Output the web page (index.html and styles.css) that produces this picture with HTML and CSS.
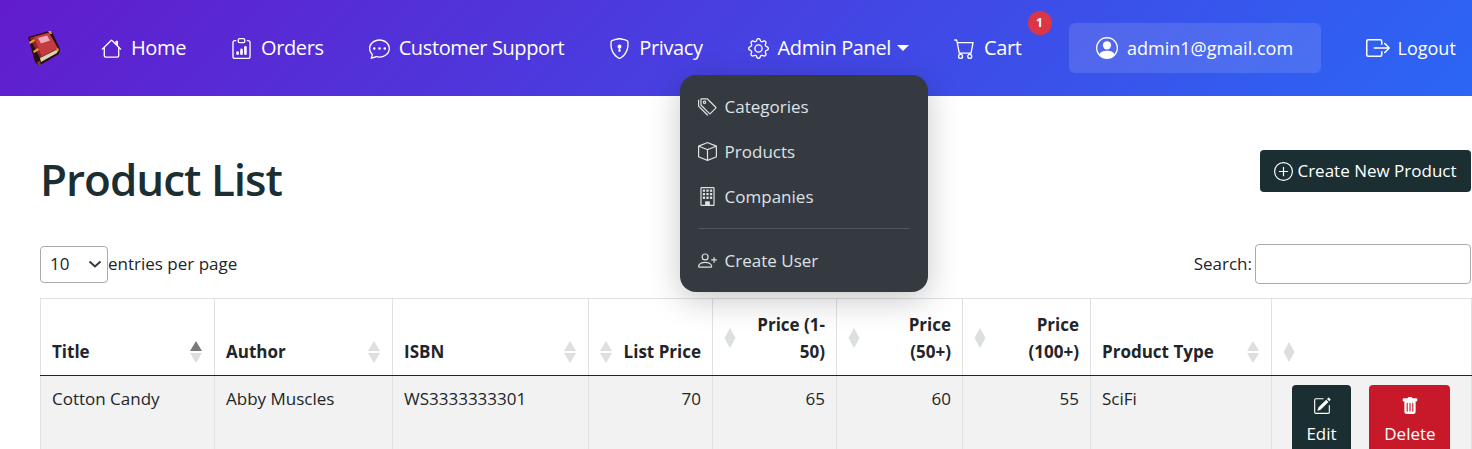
FILE: index.html
```html
<!DOCTYPE html>
<html lang="en">
<head>
  <meta charset="UTF-8">
  <meta name="viewport" content="width=device-width, initial-scale=1.0">
  <title>Product List</title>
  <link rel="stylesheet" href="styles.css">
</head>
<body>
  <svg class="sprite" xmlns="http://www.w3.org/2000/svg">
    <symbol id="i-house" viewBox="0 0 16 16"><path d="M8.707 1.5a1 1 0 0 0-1.414 0L.646 8.146a.5.5 0 0 0 .708.708L2 8.207V13.5A1.5 1.5 0 0 0 3.5 15h9a1.5 1.5 0 0 0 1.5-1.5V8.207l.646.647a.5.5 0 0 0 .708-.708L13 5.793V2.5a.5.5 0 0 0-.5-.5h-1a.5.5 0 0 0-.5.5v1.293zM13 7.207V13.5a.5.5 0 0 1-.5.5h-9a.5.5 0 0 1-.5-.5V7.207l5-5z"/></symbol>
    <symbol id="i-orders" viewBox="0 0 16 16"><path d="M4 11a1 1 0 1 1 2 0v1a1 1 0 1 1-2 0zm6-4a1 1 0 1 1 2 0v5a1 1 0 1 1-2 0zM7 9a1 1 0 0 1 2 0v3a1 1 0 1 1-2 0z"/><path d="M4 1.5H3a2 2 0 0 0-2 2V14a2 2 0 0 0 2 2h10a2 2 0 0 0 2-2V3.5a2 2 0 0 0-2-2h-1v1h1a1 1 0 0 1 1 1V14a1 1 0 0 1-1 1H3a1 1 0 0 1-1-1V3.5a1 1 0 0 1 1-1h1z"/><path d="M9.5 1a.5.5 0 0 1 .5.5v1a.5.5 0 0 1-.5.5h-3a.5.5 0 0 1-.5-.5v-1a.5.5 0 0 1 .5-.5zm-3-1A1.5 1.5 0 0 0 5 1.5v1A1.5 1.5 0 0 0 6.5 4h3A1.5 1.5 0 0 0 11 2.5v-1A1.5 1.5 0 0 0 9.5 0z"/></symbol>
    <symbol id="i-chat" viewBox="0 0 16 16"><path d="M5 8a1 1 0 1 1-2 0 1 1 0 0 1 2 0m4 0a1 1 0 1 1-2 0 1 1 0 0 1 2 0m3 1a1 1 0 1 0 0-2 1 1 0 0 0 0 2"/><path d="m2.165 15.803.02-.004c1.83-.363 2.948-.842 3.468-1.105A9 9 0 0 0 8 15c4.418 0 8-3.134 8-7s-3.582-7-8-7-8 3.134-8 7c0 1.76.743 3.37 1.97 4.6a10.4 10.4 0 0 1-.524 2.318l-.003.011a11 11 0 0 1-.244.637c-.079.186.074.394.273.362a22 22 0 0 0 .693-.125m.8-3.108a1 1 0 0 0-.287-.801C1.618 10.83 1 9.468 1 8c0-3.192 3.004-6 7-6s7 2.808 7 6-3.004 6-7 6a8 8 0 0 1-2.088-.272 1 1 0 0 0-.711.074c-.387.196-1.24.57-2.634.893a11 11 0 0 0 .398-2"/></symbol>
    <symbol id="i-shield" viewBox="0 0 16 16"><path d="M5.338 1.59a61 61 0 0 0-2.837.856.48.48 0 0 0-.328.39c-.554 4.157.726 7.19 2.253 9.188a10.7 10.7 0 0 0 2.287 2.233c.346.244.652.42.893.533q.18.085.293.118a1 1 0 0 0 .101.025 1 1 0 0 0 .1-.025q.114-.034.294-.118c.24-.113.547-.29.893-.533a10.7 10.7 0 0 0 2.287-2.233c1.527-1.997 2.807-5.031 2.253-9.188a.48.48 0 0 0-.328-.39c-.651-.213-1.75-.56-2.837-.855C9.552 1.29 8.531 1.067 8 1.067c-.53 0-1.552.223-2.662.524zM5.072.56C6.157.265 7.31 0 8 0s1.843.265 2.928.56c1.11.3 2.229.655 2.887.87a1.54 1.54 0 0 1 1.044 1.262c.596 4.477-.787 7.795-2.465 9.99a11.8 11.8 0 0 1-2.517 2.453 7 7 0 0 1-1.048.625c-.28.132-.581.24-.829.24s-.548-.108-.829-.24a7 7 0 0 1-1.048-.625 11.8 11.8 0 0 1-2.517-2.453C1.928 10.487.545 7.169 1.141 2.692A1.54 1.54 0 0 1 2.185 1.43 63 63 0 0 1 5.072.56"/><path d="M9.5 6.5a1.5 1.5 0 0 1-1 1.415l.385 1.99a.5.5 0 0 1-.491.595h-.788a.5.5 0 0 1-.49-.595l.384-1.99a1.5 1.5 0 1 1 2-1.415"/></symbol>
    <symbol id="i-gear" viewBox="0 0 16 16"><path d="M8 4.754a3.246 3.246 0 1 0 0 6.492 3.246 3.246 0 0 0 0-6.492M5.754 8a2.246 2.246 0 1 1 4.492 0 2.246 2.246 0 0 1-4.492 0"/><path d="M9.796 1.343c-.527-1.79-3.065-1.79-3.592 0l-.094.319a.873.873 0 0 1-1.255.52l-.292-.16c-1.64-.892-3.433.902-2.54 2.541l.159.292a.873.873 0 0 1-.52 1.255l-.319.094c-1.79.527-1.79 3.065 0 3.592l.319.094a.873.873 0 0 1 .52 1.255l-.16.292c-.892 1.64.901 3.434 2.541 2.54l.292-.159a.873.873 0 0 1 1.255.52l.094.319c.527 1.79 3.065 1.79 3.592 0l.094-.319a.873.873 0 0 1 1.255-.52l.292.16c1.64.893 3.434-.902 2.54-2.541l-.159-.292a.873.873 0 0 1 .52-1.255l.319-.094c1.79-.527 1.79-3.065 0-3.592l-.319-.094a.873.873 0 0 1-.52-1.255l.16-.292c.893-1.64-.902-3.433-2.541-2.54l-.292.159a.873.873 0 0 1-1.255-.52zm-2.633.283c.246-.835 1.428-.835 1.674 0l.094.319a1.873 1.873 0 0 0 2.693 1.115l.291-.16c.764-.415 1.6.42 1.184 1.185l-.159.292a1.873 1.873 0 0 0 1.116 2.692l.318.094c.835.246.835 1.428 0 1.674l-.319.094a1.873 1.873 0 0 0-1.115 2.693l.16.291c.415.764-.42 1.6-1.185 1.184l-.291-.159a1.873 1.873 0 0 0-2.693 1.116l-.094.318c-.246.835-1.428.835-1.674 0l-.094-.319a1.873 1.873 0 0 0-2.692-1.115l-.292.16c-.764.415-1.6-.42-1.184-1.185l.159-.291A1.873 1.873 0 0 0 1.945 8.93l-.319-.094c-.835-.246-.835-1.428 0-1.674l.319-.094A1.873 1.873 0 0 0 3.06 4.377l-.16-.292c-.415-.764.42-1.6 1.185-1.184l.292.159a1.873 1.873 0 0 0 2.692-1.115z"/></symbol>
    <symbol id="i-cart" viewBox="0 0 16 16"><path d="M0 1.5A.5.5 0 0 1 .5 1H2a.5.5 0 0 1 .485.379L2.89 3H14.5a.5.5 0 0 1 .491.592l-1.5 8A.5.5 0 0 1 13 12H4a.5.5 0 0 1-.491-.408L2.01 3.607 1.61 2H.5a.5.5 0 0 1-.5-.5M3.102 4l1.313 7h8.17l1.313-7zM5 12a2 2 0 1 0 0 4 2 2 0 0 0 0-4m7 0a2 2 0 1 0 0 4 2 2 0 0 0 0-4m-7 1a1 1 0 1 1 0 2 1 1 0 0 1 0-2m7 0a1 1 0 1 1 0 2 1 1 0 0 1 0-2"/></symbol>
    <symbol id="i-person" viewBox="0 0 16 16"><path d="M11 6a3 3 0 1 1-6 0 3 3 0 0 1 6 0"/><path fill-rule="evenodd" d="M0 8a8 8 0 1 1 16 0A8 8 0 0 1 0 8m8-7a7 7 0 0 0-5.468 11.37C3.242 11.226 4.805 10 8 10s4.757 1.225 5.468 2.37A7 7 0 0 0 8 1"/></symbol>
    <symbol id="i-logout" viewBox="0 0 16 16"><path fill-rule="evenodd" d="M10 12.5a.5.5 0 0 1-.5.5h-8a.5.5 0 0 1-.5-.5v-9a.5.5 0 0 1 .5-.5h8a.5.5 0 0 1 .5.5v2a.5.5 0 0 0 1 0v-2A1.5 1.5 0 0 0 9.5 2h-8A1.5 1.5 0 0 0 0 3.5v9A1.5 1.5 0 0 0 1.5 14h8a1.5 1.5 0 0 0 1.5-1.5v-2a.5.5 0 0 0-1 0z"/><path fill-rule="evenodd" d="M15.854 8.354a.5.5 0 0 0 0-.708l-3-3a.5.5 0 0 0-.708.708L14.293 7.5H5.5a.5.5 0 0 0 0 1h8.793l-2.147 2.146a.5.5 0 0 0 .708.708z"/></symbol>
    <symbol id="i-tags" viewBox="0 0 16 16"><path d="M3 2v4.586l7 7L14.586 9l-7-7zM2 2a1 1 0 0 1 1-1h4.586a1 1 0 0 1 .707.293l7 7a1 1 0 0 1 0 1.414l-4.586 4.586a1 1 0 0 1-1.414 0l-7-7A1 1 0 0 1 2 6.586z"/><path d="M5.5 5a.5.5 0 1 1 0-1 .5.5 0 0 1 0 1m0 1a1.5 1.5 0 1 0 0-3 1.5 1.5 0 0 0 0 3M1 7.086a1 1 0 0 0 .293.707L8.75 15.25l-.043.043a1 1 0 0 1-1.414 0l-7-7A1 1 0 0 1 0 7.586V3a1 1 0 0 1 1-1z"/></symbol>
    <symbol id="i-box" viewBox="0 0 16 16"><path d="M8.186 1.113a.5.5 0 0 0-.372 0L1.846 3.5 8 5.961 14.154 3.5zM15 4.239l-6.5 2.6v7.922l6.5-2.6V4.24zM7.5 14.762V6.838L1 4.239v7.925zM7.443.184a1.5 1.5 0 0 1 1.114 0l7.129 2.852A.5.5 0 0 1 16 3.5v8.662a1 1 0 0 1-.629.928l-7.185 2.874a.5.5 0 0 1-.372 0L.63 13.09a1 1 0 0 1-.63-.928V3.5a.5.5 0 0 1 .314-.464z"/></symbol>
    <symbol id="i-building" viewBox="0 0 16 16"><path d="M4 2.5a.5.5 0 0 1 .5-.5h1a.5.5 0 0 1 .5.5v1a.5.5 0 0 1-.5.5h-1a.5.5 0 0 1-.5-.5zm3 0a.5.5 0 0 1 .5-.5h1a.5.5 0 0 1 .5.5v1a.5.5 0 0 1-.5.5h-1a.5.5 0 0 1-.5-.5zm3.5-.5a.5.5 0 0 0-.5.5v1a.5.5 0 0 0 .5.5h1a.5.5 0 0 0 .5-.5v-1a.5.5 0 0 0-.5-.5zM4 5.500a.5.5 0 0 1 .5-.5h1a.5.5 0 0 1 .5.5v1a.5.5 0 0 1-.5.5h-1a.5.5 0 0 1-.5-.5zM7.500 5a.5.5 0 0 0-.5.5v1a.5.5 0 0 0 .5.5h1a.5.5 0 0 0 .5-.5v-1a.5.5 0 0 0-.5-.5zm2.500.5a.5.5 0 0 1 .5-.5h1a.5.5 0 0 1 .5.5v1a.5.5 0 0 1-.5.5h-1a.5.5 0 0 1-.5-.5zM4.500 8a.5.5 0 0 0-.5.5v1a.5.5 0 0 0 .5.5h1a.5.5 0 0 0 .5-.5v-1a.5.5 0 0 0-.5-.5zm2.500.5a.5.5 0 0 1 .5-.5h1a.5.5 0 0 1 .5.5v1a.5.5 0 0 1-.5.5h-1a.5.5 0 0 1-.5-.5zm3.500-.5a.5.5 0 0 0-.5.5v1a.5.5 0 0 0 .5.5h1a.5.5 0 0 0 .5-.5v-1a.5.5 0 0 0-.5-.5z"/><path d="M2 1a1 1 0 0 1 1-1h10a1 1 0 0 1 1 1v14a1 1 0 0 1-1 1H3a1 1 0 0 1-1-1zm11 0H3v14h3v-2.5a.5.5 0 0 1 .5-.5h3a.5.5 0 0 1 .5.5V15h3z"/></symbol>
    <symbol id="i-user-plus" viewBox="0 0 16 16"><path d="M6 8a3 3 0 1 0 0-6 3 3 0 0 0 0 6m2-3a2 2 0 1 1-4 0 2 2 0 0 1 4 0m4 8c0 1-1 1-1 1H1s-1 0-1-1 1-4 6-4 6 3 6 4m-1-.004c-.001-.246-.154-.986-.832-1.664C9.516 10.68 8.289 10 6 10s-3.516.68-4.168 1.332c-.678.678-.83 1.418-.832 1.664z"/><path fill-rule="evenodd" d="M13.5 5a.5.5 0 0 1 .5.5V7h1.5a.5.5 0 0 1 0 1H14v1.5a.5.5 0 0 1-1 0V8h-1.5a.5.5 0 0 1 0-1H13V5.5a.5.5 0 0 1 .5-.5"/></symbol>
    <symbol id="i-plus" viewBox="0 0 16 16"><path d="M8 15A7 7 0 1 1 8 1a7 7 0 0 1 0 14m0 1A8 8 0 1 0 8 0a8 8 0 0 0 0 16"/><path d="M8 4a.5.5 0 0 1 .5.5v3h3a.5.5 0 0 1 0 1h-3v3a.5.5 0 0 1-1 0v-3h-3a.5.5 0 0 1 0-1h3v-3A.5.5 0 0 1 8 4"/></symbol>
    <symbol id="i-edit" viewBox="0 0 16 16"><path d="M15.502 1.94a.5.5 0 0 1 0 .706L14.459 3.69l-2-2L13.502.646a.5.5 0 0 1 .707 0l1.293 1.293zm-1.75 2.456-2-2L4.939 9.21a.5.5 0 0 0-.121.196l-.805 2.414a.25.25 0 0 0 .316.316l2.414-.805a.5.5 0 0 0 .196-.12l6.813-6.814z"/><path fill-rule="evenodd" d="M1 13.5A1.5 1.5 0 0 0 2.5 15h11a1.5 1.5 0 0 0 1.5-1.5v-6a.5.5 0 0 0-1 0v6a.5.5 0 0 1-.5.5h-11a.5.5 0 0 1-.5-.5v-11a.5.5 0 0 1 .5-.5H9a.5.5 0 0 0 0-1H2.5A1.5 1.5 0 0 0 1 2.5z"/></symbol>
    <symbol id="i-trash" viewBox="0 0 16 16"><path d="M2.5 1a1 1 0 0 0-1 1v1a1 1 0 0 0 1 1H3v9a2 2 0 0 0 2 2h6a2 2 0 0 0 2-2V4h.5a1 1 0 0 0 1-1V2a1 1 0 0 0-1-1H10a1 1 0 0 0-1-1H7a1 1 0 0 0-1 1zm3 4a.5.5 0 0 1 .5.5v7a.5.5 0 0 1-1 0v-7a.5.5 0 0 1 .5-.5M8 5a.5.5 0 0 1 .5.5v7a.5.5 0 0 1-1 0v-7A.5.5 0 0 1 8 5m3 .5v7a.5.5 0 0 1-1 0v-7a.5.5 0 0 1 1 0"/></symbol>
    <symbol id="i-sort" viewBox="0 0 12 22"><path class="up" d="M6 0l6 10H0z"/><path d="M6 22L0 12h12z"/></symbol>
    <symbol id="i-diamond" viewBox="0 0 12 22"><path d="M6 1l5.500 10L6 21 .5 11z"/></symbol>
  </svg>

  <nav class="navbar">
    <a class="brand" href="#">
      <svg class="book" viewBox="0 0 34 36">
        <path d="M2 7L23 1l3 1 8 17-1 5-17 10-4 1-3-3z" fill="#2a0b16"/>
        <path d="M4 8L23 2.500l9 16-18 9z" fill="#c43c42"/>
        <path d="M4 8l4-1 8 20-2 1z" fill="#8c2230"/>
        <path d="M14 28l18-9-1 4-16 9z" fill="#d9d6b0"/>
        <path d="M11 32l3-1 1 5-2 0z" fill="#7a4a1e"/>
        <path d="M12 8l9-2.500 3 5-9 3z" fill="#eeaab4"/>
        <path d="M3 12l5-3 1 2-5 3zM7 21l5-3 1 2-5 3z" fill="#e2a814"/>
        <path d="M22 1l3 0 1 3-2 0zM31 18l2 1-1 3-2-1z" fill="#e2a814"/>
      </svg>
    </a>
    <ul class="nav-links">
      <li><a class="nav-link" href="#"><svg class="icon"><use href="#i-house"/></svg>Home</a></li>
      <li><a class="nav-link" href="#"><svg class="icon"><use href="#i-orders"/></svg>Orders</a></li>
      <li><a class="nav-link" href="#"><svg class="icon"><use href="#i-chat"/></svg>Customer Support</a></li>
      <li><a class="nav-link" href="#"><svg class="icon"><use href="#i-shield"/></svg>Privacy</a></li>
      <li class="admin-item">
        <a class="nav-link" href="#"><svg class="icon"><use href="#i-gear"/></svg>Admin Panel<span class="caret"></span></a>
        <div class="dropdown">
          <a class="dropdown-item" href="#"><svg class="icon-sm"><use href="#i-tags"/></svg>Categories</a>
          <a class="dropdown-item" href="#"><svg class="icon-sm"><use href="#i-box"/></svg>Products</a>
          <a class="dropdown-item" href="#"><svg class="icon-sm"><use href="#i-building"/></svg>Companies</a>
          <hr class="dropdown-divider">
          <a class="dropdown-item" href="#"><svg class="icon-sm"><use href="#i-user-plus"/></svg>Create User</a>
        </div>
      </li>
      <li class="cart-item">
        <a class="nav-link" href="#"><svg class="icon"><use href="#i-cart"/></svg>Cart</a>
        <span class="badge">1</span>
      </li>
    </ul>
    <a class="user-box" href="#"><svg class="icon"><use href="#i-person"/></svg>admin1@gmail.com</a>
    <a class="logout" href="#"><svg class="icon"><use href="#i-logout"/></svg>Logout</a>
  </nav>

  <main class="content">
    <div class="page-head">
      <h1>Product List</h1>
      <a class="btn btn-create" href="#"><svg class="icon-btn"><use href="#i-plus"/></svg>Create New Product</a>
    </div>

    <div class="table-tools">
      <label class="length-label">
        <select class="length-select"><option>10</option><option>25</option><option>50</option></select>entries per page
      </label>
      <label class="search-label">Search:<input class="search-input" type="search"></label>
    </div>

    <table class="product-table">
      <colgroup>
        <col class="c-title"><col class="c-author"><col class="c-isbn"><col class="c-list"><col class="c-p1"><col class="c-p2"><col class="c-p3"><col class="c-type"><col class="c-act">
      </colgroup>
      <thead>
        <tr>
          <th><div class="th-wrap"><span>Title</span><svg class="sort sort-asc"><use href="#i-sort"/></svg></div></th>
          <th><div class="th-wrap"><span>Author</span><svg class="sort"><use href="#i-sort"/></svg></div></th>
          <th><div class="th-wrap"><span>ISBN</span><svg class="sort"><use href="#i-sort"/></svg></div></th>
          <th class="num"><div class="th-wrap"><svg class="sort"><use href="#i-sort"/></svg><span>List Price</span></div></th>
          <th class="num"><div class="th-wrap"><svg class="sort"><use href="#i-diamond"/></svg><span>Price (1-<br>50)</span></div></th>
          <th class="num"><div class="th-wrap"><svg class="sort"><use href="#i-diamond"/></svg><span>Price<br>(50+)</span></div></th>
          <th class="num"><div class="th-wrap"><svg class="sort"><use href="#i-diamond"/></svg><span>Price<br>(100+)</span></div></th>
          <th><div class="th-wrap"><span>Product Type</span><svg class="sort"><use href="#i-sort"/></svg></div></th>
          <th><div class="th-wrap"><svg class="sort"><use href="#i-diamond"/></svg></div></th>
        </tr>
      </thead>
      <tbody>
        <tr>
          <td>Cotton Candy</td>
          <td>Abby Muscles</td>
          <td>WS3333333301</td>
          <td class="num">70</td>
          <td class="num">65</td>
          <td class="num">60</td>
          <td class="num">55</td>
          <td>SciFi</td>
          <td class="actions">
            <a class="btn btn-edit" href="#"><svg class="icon-btn"><use href="#i-edit"/></svg>Edit</a>
            <a class="btn btn-delete" href="#"><svg class="icon-btn"><use href="#i-trash"/></svg>Delete</a>
          </td>
        </tr>
      </tbody>
    </table>
  </main>
</body>
</html>
```

FILE: styles.css
```css
html, body {
  height: 100%;
  overflow: hidden;
}
body {
  margin: 0;
  font-family: 'Open Sans', 'Noto Sans', sans-serif;
  font-size: 17px;
  line-height: 1.5;
  color: #212529;
  background-color: #fff;
}
a {
  text-decoration: none;
  color: inherit;
}
.sprite {
  display: none;
}
.icon, .icon-sm, .icon-btn {
  fill: currentColor;
  flex: none;
}

/* navbar */
.navbar {
  height: 96px;
  box-sizing: border-box;
  padding: 0 16px 0 26px;
  display: flex;
  align-items: center;
  color: #fff;
  background: linear-gradient(135deg, #621ccd 0%, #2b66f5 100%);
}
.brand {
  display: flex;
  margin-right: 41px;
}
.book {
  width: 34px;
  height: 36px;
}
.nav-links {
  display: flex;
  align-items: center;
  gap: 45px;
  margin: 0;
  padding: 0;
  list-style: none;
}
.nav-link {
  display: flex;
  align-items: center;
  font-size: 20px;
  letter-spacing: -0.38px;
  white-space: nowrap;
}
.icon {
  width: 21px;
  height: 21px;
  margin-right: 9px;
}
.caret {
  width: 0;
  height: 0;
  margin-left: 6px;
  border-top: 6px solid #fff;
  border-left: 6px solid transparent;
  border-right: 6px solid transparent;
}
.admin-item, .cart-item {
  position: relative;
}
.badge {
  position: absolute;
  top: -22px;
  right: -30px;
  width: 24px;
  height: 24px;
  border-radius: 50%;
  background-color: #dc3545;
  color: #fff;
  font-size: 12px;
  font-weight: 700;
  line-height: 24px;
  text-align: center;
}
.user-box {
  width: 252px;
  height: 50px;
  box-sizing: border-box;
  margin-left: 47px;
  display: flex;
  align-items: center;
  justify-content: center;
  border-radius: 6px;
  font-size: 18px;
  background-color: rgba(255, 255, 255, 0.12);
}
.user-box .icon {
  width: 22px;
  height: 22px;
}
.logout {
  margin-left: 45px;
  display: flex;
  align-items: center;
  font-size: 18px;
}
.logout .icon {
  width: 24px;
  height: 24px;
  margin-right: 8px;
}

/* dropdown */
.dropdown {
  position: absolute;
  top: 42px;
  left: -68px;
  width: 248px;
  height: 217px;
  box-sizing: border-box;
  padding: 9px 18px;
  border-radius: 16px;
  background-color: #343a40;
  color: #dee2e6;
  box-shadow: 0 8px 32px rgba(0, 0, 0, 0.22);
  z-index: 10;
}
.dropdown-item {
  height: 45px;
  display: flex;
  align-items: center;
}
.icon-sm {
  width: 19px;
  height: 19px;
  margin-right: 8px;
}
.dropdown-divider {
  margin: 9px 0 9px;
  border: 0;
  border-top: 1px solid #50565c;
}

/* page */
.content {
  padding: 0 1px 0 40px;
}
.page-head {
  height: 148px;
  display: flex;
  align-items: center;
  justify-content: space-between;
}
h1 {
  margin: 18px 0 0;
  font-size: 44px;
  font-weight: 600;
  letter-spacing: -1px;
  color: #1b2f33;
}
.btn {
  display: inline-flex;
  border-radius: 4px;
  color: #fff;
}
.btn-create {
  width: 211px;
  height: 42px;
  box-sizing: border-box;
  margin-top: 2px;
  align-items: center;
  justify-content: center;
  background-color: #1b2f33;
}
.btn-create .icon-btn {
  width: 19px;
  height: 19px;
  margin-right: 4px;
}
.table-tools {
  height: 40px;
  margin-bottom: 14px;
  display: flex;
  align-items: center;
  justify-content: space-between;
}
.length-label {
  display: flex;
  align-items: center;
}
.length-select {
  width: 68px;
  height: 37px;
  padding-left: 9px;
  border: 1px solid #aaa;
  border-radius: 4px;
  background: #fff url("data:image/svg+xml,%3Csvg xmlns='http://www.w3.org/2000/svg' viewBox='0 0 14 8'%3E%3Cpath d='M1.500 1.500L7 6.500l5.500-5' fill='none' stroke='%23343a40' stroke-width='2'/%3E%3C/svg%3E") no-repeat right 5px center / 14px 8px;
  appearance: none;
  font: inherit;
  color: #212529;
}
.search-label {
  display: flex;
  align-items: center;
  gap: 3px;
}
.search-input {
  width: 216px;
  height: 40px;
  box-sizing: border-box;
  border: 1px solid #aaa;
  border-radius: 4px;
  background-color: #fff;
}

/* table */
.product-table {
  width: 1431px;
  table-layout: fixed;
  border-collapse: collapse;
}
.c-title { width: 174px; }
.c-author { width: 178px; }
.c-isbn { width: 196px; }
.c-list { width: 124px; }
.c-p1 { width: 124px; }
.c-p2 { width: 126px; }
.c-p3 { width: 128px; }
.c-type { width: 181px; }
.c-act { width: 200px; }

.product-table th, .product-table td {
  border: 1px solid #dee2e6;
}
.product-table th {
  padding: 12px 12px 10px 11px;
  vertical-align: bottom;
  text-align: left;
  font-weight: 700;
  line-height: 27px;
  border-bottom: 1px solid #212529;
}
.th-wrap {
  min-height: 27px;
  display: flex;
  align-items: center;
  justify-content: space-between;
}
.product-table .num {
  padding-right: 11px;
  text-align: right;
}
.sort {
  width: 12px;
  height: 22px;
  flex: none;
  fill: #dcdfdf;
}
.up {
  fill: var(--sort-up, #dcdfdf);
}
.sort-asc {
  --sort-up: #7a7a7a;
}
.product-table td {
  height: 120px;
  padding: 10px 11px;
  vertical-align: top;
  background-color: #f2f2f2;
}
.product-table .actions {
  padding-top: 9px;
  padding-left: 20px;
}
.btn-edit, .btn-delete {
  height: 74px;
  box-sizing: border-box;
  padding-top: 12px;
  flex-direction: column;
  align-items: center;
}
.btn-edit {
  width: 59px;
  margin-right: 14px;
  background-color: #1b2f33;
}
.btn-delete {
  width: 81px;
  background-color: #c8192b;
}
.actions .icon-btn {
  width: 18px;
  height: 18px;
  margin-bottom: 6px;
}
```
